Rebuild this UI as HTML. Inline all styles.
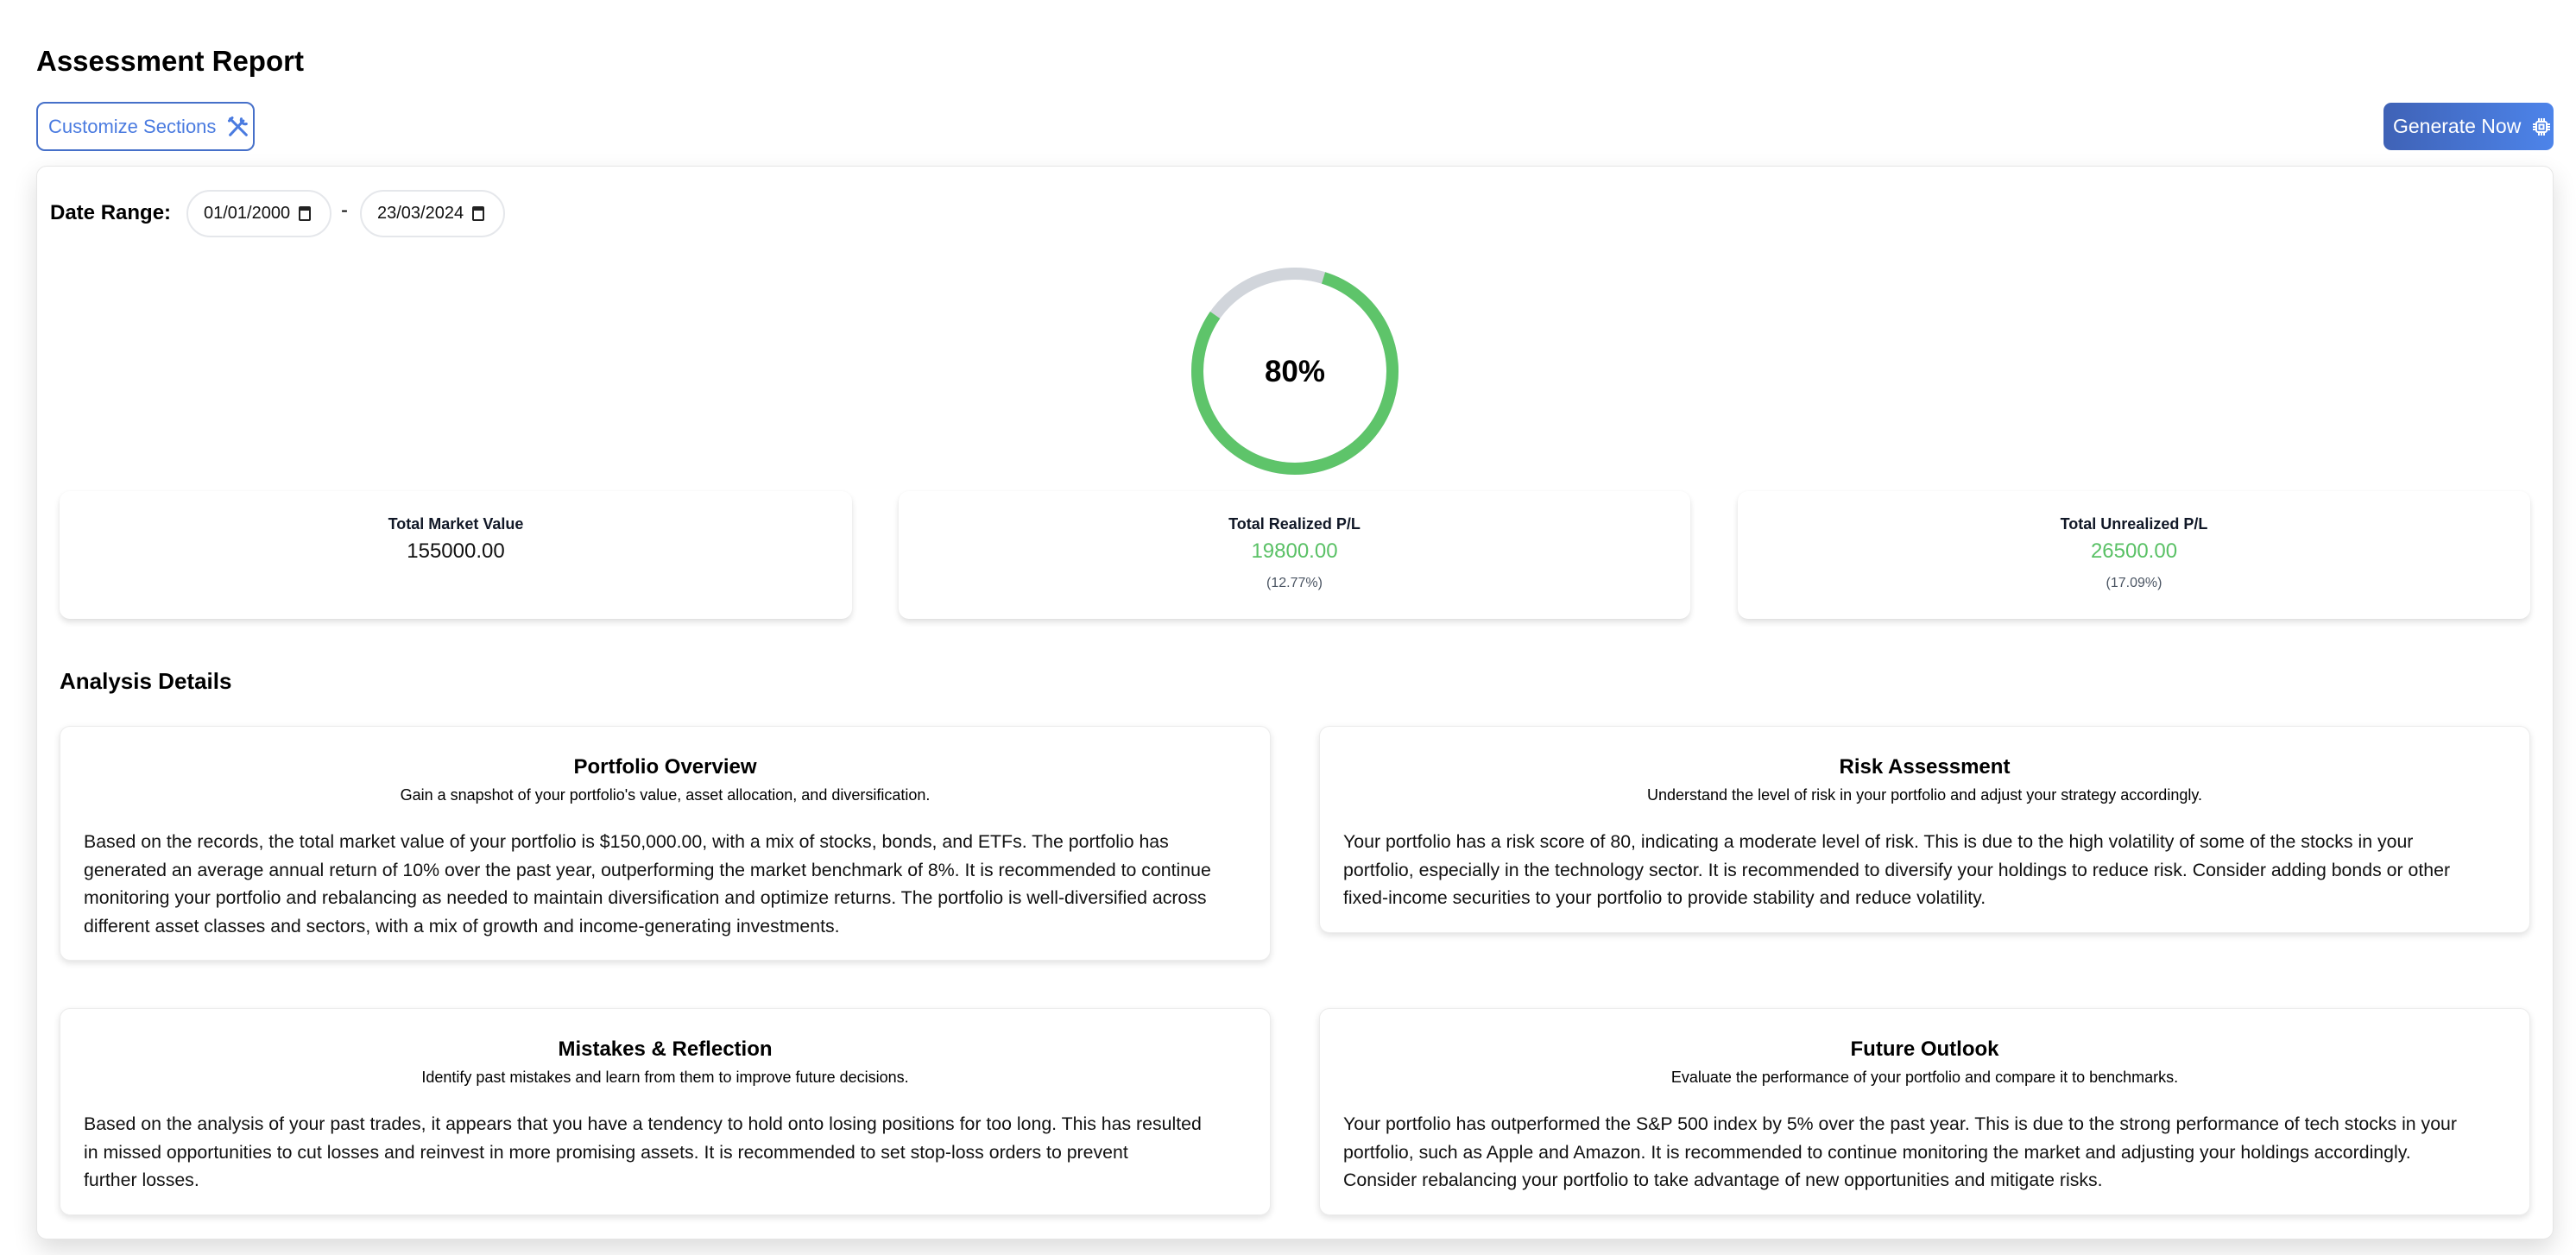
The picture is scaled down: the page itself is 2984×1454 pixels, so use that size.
<!DOCTYPE html>
<html><head><meta charset="utf-8">
<style>
*{box-sizing:border-box;margin:0;padding:0}
html,body{width:2984px;height:1454px;overflow:hidden;background:#fff;font-family:"Liberation Sans",Arial,sans-serif;color:#000}
.abs{position:absolute}
h1{position:absolute;left:42px;top:51px;font-size:33px;font-weight:700;line-height:40px;white-space:nowrap}
.cust{position:absolute;left:42px;top:118px;width:253px;height:57px;border:2px solid #4670c9;border-radius:10px;color:#4a7be0;font-size:22px;display:flex;align-items:center;padding-left:12px;gap:12px;white-space:nowrap}
.gen{position:absolute;left:2761px;top:119px;width:197px;height:55px;border-radius:9px;background:linear-gradient(90deg,#3f62b6,#4d84ea);color:#fff;font-size:23px;display:flex;align-items:center;padding-left:11px;gap:12px;white-space:nowrap}
.main{position:absolute;left:42px;top:192px;width:2916px;height:1244px;border:1.5px solid #e6e6e6;border-radius:12px;background:#fff;box-shadow:0 12px 28px rgba(0,0,0,.14)}
.lbl{position:absolute;left:58px;top:230px;font-size:24px;font-weight:700;line-height:34px}
.inp{position:absolute;top:220px;height:55px;border:2px solid #e5e7eb;border-radius:28px;font-size:20px;display:flex;align-items:center;padding-left:18px;gap:10px;color:#111;white-space:nowrap}
.cal{display:inline-block;width:14px;height:17px;border:2.5px solid #222;border-top-width:5px;border-radius:2px}
.stat{position:absolute;top:569px;height:148px;background:#fff;border-radius:12px;box-shadow:0 4px 7px rgba(0,0,0,.12),0 0 2px rgba(0,0,0,.03);text-align:center}
.stat .t{position:absolute;left:0;right:0;top:28px;font-size:18px;font-weight:700;color:#111827}
.stat .v{position:absolute;left:0;right:0;top:56px;font-size:24px;color:#111}
.stat .v.g{color:#5ac166}
.stat .p{position:absolute;left:0;right:0;top:98px;font-size:16px;color:#4b5563}
.ad{position:absolute;left:69px;top:774px;font-size:26px;font-weight:700}
.card{position:absolute;background:#fff;border:1.5px solid #ececec;border-radius:12px;box-shadow:0 3px 8px rgba(0,0,0,.12)}
.card .ct{position:absolute;left:0;right:0;top:32px;text-align:center;font-size:24px;font-weight:700;line-height:30px}
.card .cs{position:absolute;left:0;right:0;top:67px;text-align:center;font-size:18px;line-height:24px}
.card .cb{position:absolute;left:27px;top:117px;font-size:21.3px;line-height:32.7px;white-space:nowrap;color:#111}
</style></head><body>
<h1>Assessment Report</h1>
<div class="cust">Customize Sections
<svg width="28" height="28" viewBox="0 0 24 24" fill="none" stroke="#4a7be0" stroke-width="2.6" stroke-linecap="round"><path d="M4 20L17 6"/><path d="M15 4a4 4 0 0 0 5 5"/><path d="M4 4l16 16"/><path d="M3 6l3-3"/></svg></div>
<div class="gen">Generate Now
<svg width="24" height="24" viewBox="0 0 24 24" fill="none" stroke="#fff" stroke-width="2"><rect x="6" y="6" width="12" height="12" rx="2"/><rect x="9.5" y="9.5" width="5" height="5"/><path d="M9 2v4M12 2v4M15 2v4M9 18v4M12 18v4M15 18v4M2 9h4M2 12h4M2 15h4M18 9h4M18 12h4M18 15h4"/></svg></div>
<div class="main"></div>
<div class="lbl">Date Range:</div>
<div class="inp" style="left:216px;width:168px">01/01/2000 <span class="cal"></span></div>
<div class="abs" style="left:395px;top:230px;font-size:24px">-</div>
<div class="inp" style="left:417px;width:168px">23/03/2024 <span class="cal"></span></div>

<svg class="abs" style="left:1370px;top:300px" width="260" height="260" viewBox="0 0 260 260">
<circle cx="130" cy="130" r="113" fill="none" stroke="#d1d5db" stroke-width="14"/>
<circle cx="130" cy="130" r="113" fill="none" stroke="#5ec46a" stroke-width="14" stroke-dasharray="568 710" transform="rotate(-73 130 130)"/>
<text x="130" y="142" text-anchor="middle" font-family="Liberation Sans,Arial,sans-serif" font-size="35" font-weight="700">80%</text>
</svg>

<div class="stat" style="left:69px;width:918px"><div class="t">Total Market Value</div><div class="v">155000.00</div></div>
<div class="stat" style="left:1041px;width:917px"><div class="t">Total Realized P/L</div><div class="v g">19800.00</div><div class="p">(12.77%)</div></div>
<div class="stat" style="left:2013px;width:918px"><div class="t">Total Unrealized P/L</div><div class="v g">26500.00</div><div class="p">(17.09%)</div></div>

<div class="ad">Analysis Details</div>

<div class="card" style="left:69px;top:841px;width:1403px;height:272px">
<div class="ct">Portfolio Overview</div>
<div class="cs">Gain a snapshot of your portfolio's value, asset allocation, and diversification.</div>
<div class="cb">Based on the records, the total market value of your portfolio is $150,000.00, with a mix of stocks, bonds, and ETFs. The portfolio has<br>generated an average annual return of 10% over the past year, outperforming the market benchmark of 8%. It is recommended to continue<br>monitoring your portfolio and rebalancing as needed to maintain diversification and optimize returns. The portfolio is well-diversified across<br>different asset classes and sectors, with a mix of growth and income-generating investments.</div>
</div>
<div class="card" style="left:1528px;top:841px;width:1403px;height:240px">
<div class="ct">Risk Assessment</div>
<div class="cs">Understand the level of risk in your portfolio and adjust your strategy accordingly.</div>
<div class="cb">Your portfolio has a risk score of 80, indicating a moderate level of risk. This is due to the high volatility of some of the stocks in your<br>portfolio, especially in the technology sector. It is recommended to diversify your holdings to reduce risk. Consider adding bonds or other<br>fixed-income securities to your portfolio to provide stability and reduce volatility.</div>
</div>
<div class="card" style="left:69px;top:1168px;width:1403px;height:240px">
<div class="ct">Mistakes &amp; Reflection</div>
<div class="cs">Identify past mistakes and learn from them to improve future decisions.</div>
<div class="cb">Based on the analysis of your past trades, it appears that you have a tendency to hold onto losing positions for too long. This has resulted<br>in missed opportunities to cut losses and reinvest in more promising assets. It is recommended to set stop-loss orders to prevent<br>further losses.</div>
</div>
<div class="card" style="left:1528px;top:1168px;width:1403px;height:240px">
<div class="ct">Future Outlook</div>
<div class="cs">Evaluate the performance of your portfolio and compare it to benchmarks.</div>
<div class="cb">Your portfolio has outperformed the S&amp;P 500 index by 5% over the past year. This is due to the strong performance of tech stocks in your<br>portfolio, such as Apple and Amazon. It is recommended to continue monitoring the market and adjusting your holdings accordingly.<br>Consider rebalancing your portfolio to take advantage of new opportunities and mitigate risks.</div>
</div>
</body></html>
